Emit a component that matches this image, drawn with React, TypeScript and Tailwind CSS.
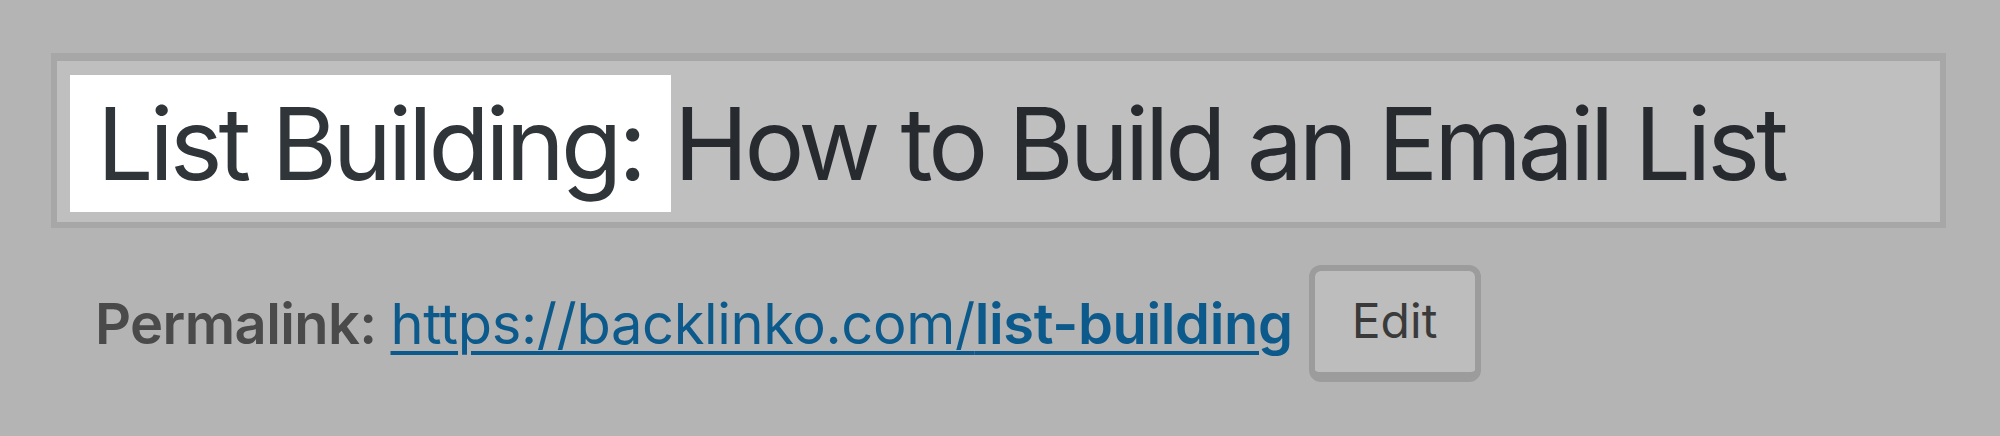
import React from "react";

export default function App() {
  return (
    <div
      className="w-[2000px] h-[436px] bg-[#b4b4b4] pt-[53px] pl-[51px]"
      style={{ fontFamily: "Inter, 'Noto Sans', sans-serif" }}
    >
      <div className="w-[1895px] h-[175px] border-[6px] border-t-[8px] border-[#a7a7a7] bg-[#bfbfbf] pl-[13px] pt-[14px]">
        <div className="flex items-center h-[137px] text-[100px] leading-none text-[#272b30] tracking-[-4px] whitespace-nowrap">
          <span className="bg-white h-[137px] flex items-center pl-[27px] pr-[28px] text-[#30353a]">List Building:</span>
          <span className="pl-[3px]">How to Build an Email List</span>
        </div>
      </div>
      <div className="flex items-center mt-[37px] pl-[44px] whitespace-nowrap">
        <span className="text-[56px] font-semibold text-[#4a4a4a] tracking-[-0.6px]">Permalink:</span>
        <a
          href="#"
          className="ml-[14px] text-[56px] text-[#0c5a8b] underline decoration-[4px] underline-offset-[7px] tracking-[-0.35px]"
        >
          https://backlinko.com/<span className="font-semibold">list-building</span>
        </a>
        <button className="ml-[16px] w-[172px] h-[117px] rounded-[12px] border-[6px] border-b-[10px] border-[#9c9c9c] bg-[#bdbdbd] text-[48px] text-[#3a3a3a] flex items-center justify-center pb-[2px]">
          Edit
        </button>
      </div>
    </div>
  );
}
